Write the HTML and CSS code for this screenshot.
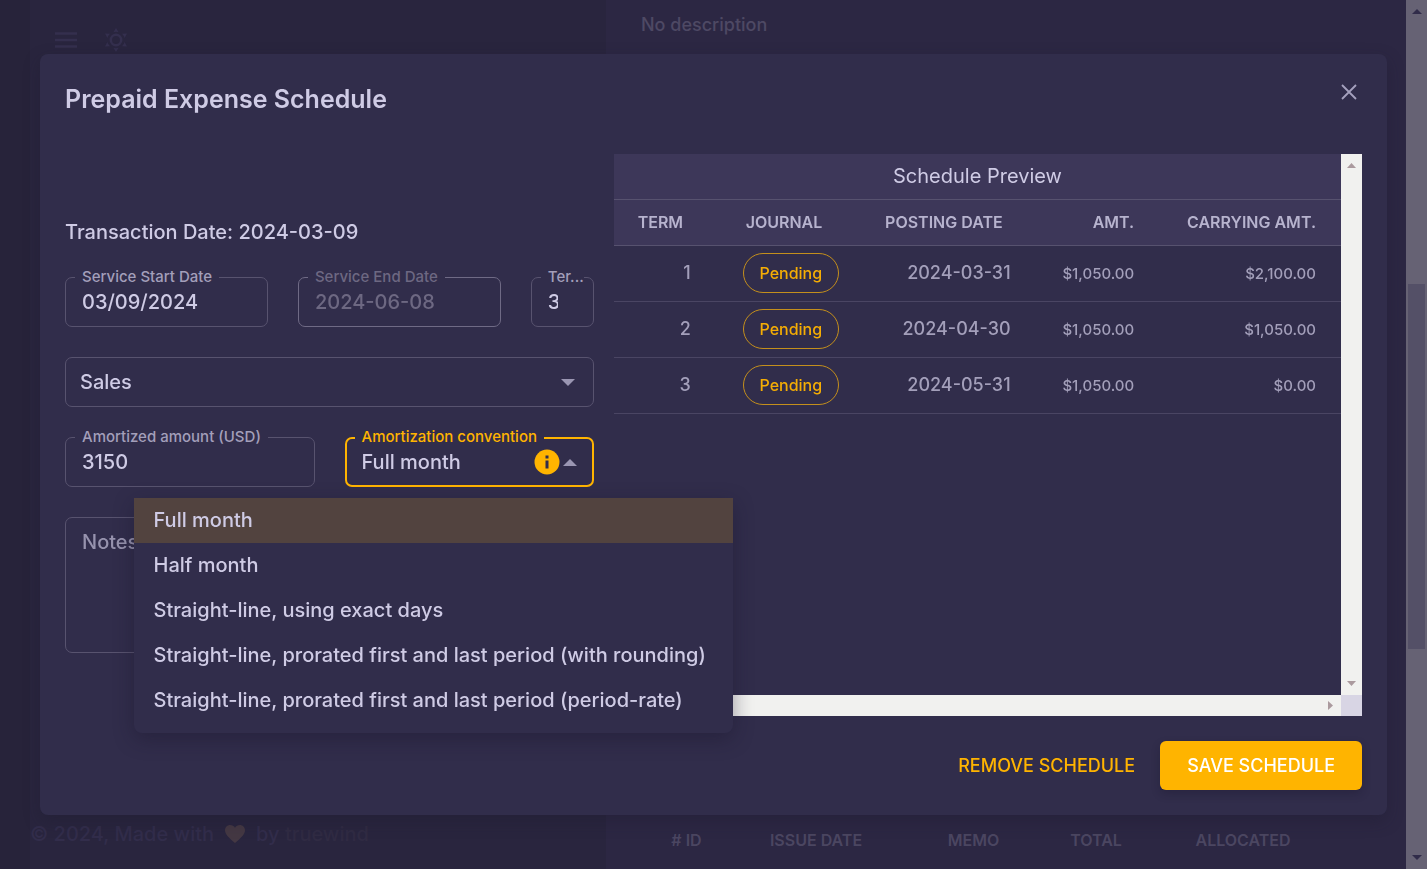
FILE: index.html
```html
<!DOCTYPE html>
<html lang="en">
<head>
<meta charset="utf-8">
<meta name="viewport" content="width=device-width, initial-scale=1">
<title>Prepaid Expense Schedule</title>
<link rel="stylesheet" href="styles.css">
</head>
<body>
<div class="page">
  <div class="page-left">
    <header class="toolbar">
      <button class="tool" type="button" aria-label="Menu">
        <svg width="24" height="24" viewBox="0 0 24 24" fill="none" stroke="currentColor" stroke-width="2.500"><path d="M1 5.500h22M1 12h22M1 18.500h22"/></svg>
      </button>
      <button class="tool" type="button" aria-label="Toggle theme">
        <svg width="24" height="24" viewBox="0 0 24 24" fill="none" stroke="currentColor" stroke-width="2.500"><circle cx="12" cy="12" r="5.200"/><path fill="currentColor" stroke="none" d="M12 0l2.600 4.300a8 8 0 0 0-5.200 0zM12 24l2.600-4.300a8 8 0 0 1-5.200 0zM1 5.600l5 .1a9 9 0 0 0-2.600 4.400zM23 5.600l-5 .1a9 9 0 0 1 2.600 4.400zM1 18.400l5-.1a9 9 0 0 1-2.600-4.400zM23 18.400l-5-.1a9 9 0 0 0 2.600-4.400z"/></svg>
      </button>
    </header>
    <footer class="credits">
      <span>© 2024, Made with</span>
      <svg class="heart" width="20" height="18" viewBox="0 0 20 18"><path fill="currentColor" d="M10 18C4 13 0 9.500 0 5.300 0 2.200 2.300 0 5.200 0 7.200 0 9 1 10 2.700 11 1 12.800 0 14.800 0 17.700 0 20 2.200 20 5.300 20 9.500 16 13 10 18z"/></svg>
      <span>by <a class="credits-link" href="#">truewind</a></span>
    </footer>
  </div>
  <main class="page-right">
    <p class="description">No description</p>
    <table class="bills">
      <colgroup><col class="b-id"><col class="b-date"><col class="b-memo"><col class="b-total"><col class="b-alloc"></colgroup>
      <thead><tr><th># ID</th><th>Issue Date</th><th>Memo</th><th>Total</th><th>Allocated</th></tr></thead>
    </table>
  </main>
  <div class="page-scroll">
    <svg width="10" height="5" viewBox="0 0 10 5"><path d="M0 5l5-5 5 5z"/></svg>
    <div class="page-thumb"></div>
    <svg width="10" height="5" viewBox="0 0 10 5"><path d="M0 0l5 5 5-5z"/></svg>
  </div>
</div>

<div class="overlay">
  <section class="dialog" role="dialog" aria-labelledby="dialog-title">
    <header class="dialog-head">
      <h1 class="title" id="dialog-title">Prepaid Expense Schedule</h1>
      <button class="close" type="button" aria-label="Close">
        <svg width="16" height="16" viewBox="0 0 16 16" fill="none" stroke="currentColor" stroke-width="1.800"><path d="M1 1l14 14M15 1L1 15"/></svg>
      </button>
    </header>

    <div class="dialog-body">
      <form class="form">
        <p class="transaction">Transaction Date: 2024-03-09</p>
        <div class="field span-5">
          <label class="label" for="start">Service Start Date</label>
          <input class="control" id="start" type="text" value="03/09/2024">
        </div>
        <div class="field span-5 is-disabled">
          <label class="label" for="end">Service End Date</label>
          <input class="control" id="end" type="text" value="2024-06-08" disabled>
        </div>
        <div class="field span-2">
          <label class="label label-short" for="terms">Ter...</label>
          <input class="control control-short" id="terms" type="text" value="3">
        </div>
        <div class="field span-12">
          <select class="control control-account" aria-label="Account"><option>Sales</option></select>
          <svg class="caret" width="14" height="7" viewBox="0 0 14 7"><path fill="currentColor" d="M0 0l7 7 7-7z"/></svg>
        </div>
        <div class="field span-6">
          <label class="label" for="amount">Amortized amount (USD)</label>
          <input class="control" id="amount" type="text" value="3150">
        </div>
        <div class="field span-6 is-focused">
          <label class="label" for="convention">Amortization convention</label>
          <select class="control" id="convention">
            <option>Full month</option><option>Half month</option>
            <option>Straight-line, using exact days</option>
            <option>Straight-line, prorated first and last period (with rounding)</option>
            <option>Straight-line, prorated first and last period (period-rate)</option>
          </select>
          <div class="adorn">
            <svg width="26" height="26" viewBox="0 0 26 26"><circle cx="13" cy="13" r="12.500" fill="#ffb400"/><path fill="#312d4b" d="M11.500 6.500h3v3h-3zM11.500 11.500h3v8h-3z"/></svg>
            <svg class="caret-up" width="14" height="7" viewBox="0 0 14 7"><path fill="currentColor" d="M0 7l7-7 7 7z"/></svg>
          </div>
          <ul class="menu" role="listbox" aria-label="Amortization convention">
            <li class="option is-selected" role="option" aria-selected="true">Full month</li>
            <li class="option" role="option">Half month</li>
            <li class="option" role="option">Straight-line, using exact days</li>
            <li class="option" role="option">Straight-line, prorated first and last period (with rounding)</li>
            <li class="option" role="option">Straight-line, prorated first and last period (period-rate)</li>
          </ul>
        </div>
        <div class="field span-12">
          <textarea class="control notes" rows="4" placeholder="Notes" aria-label="Notes"></textarea>
        </div>
      </form>

      <div class="preview">
        <div class="preview-view">
          <table class="schedule">
            <colgroup><col class="c-term"><col class="c-journal"><col class="c-date"><col class="c-amt"><col class="c-carry"></colgroup>
            <thead>
              <tr><th class="caption" colspan="5">Schedule Preview</th></tr>
              <tr><th class="mid">Term</th><th class="mid">Journal</th><th class="mid">Posting Date</th><th>Amt.</th><th>Carrying Amt.</th></tr>
            </thead>
            <tbody>
              <tr><td>1</td><td class="status"><span class="chip">Pending</span></td><td>2024-03-31</td><td class="money">$1,050.00</td><td class="money">$2,100.00</td></tr>
              <tr><td>2</td><td class="status"><span class="chip">Pending</span></td><td>2024-04-30</td><td class="money">$1,050.00</td><td class="money">$1,050.00</td></tr>
              <tr><td>3</td><td class="status"><span class="chip">Pending</span></td><td>2024-05-31</td><td class="money">$1,050.00</td><td class="money">$0.00</td></tr>
            </tbody>
          </table>
        </div>
        <div class="bar bar-y">
          <svg width="9" height="5" viewBox="0 0 9 5"><path d="M0 5l4.500-5L9 5z"/></svg>
          <svg width="9" height="5" viewBox="0 0 9 5"><path d="M0 0l4.500 5L9 0z"/></svg>
        </div>
        <div class="bar bar-x">
          <svg width="5" height="9" viewBox="0 0 5 9"><path d="M5 0L0 4.500 5 9z"/></svg>
          <svg width="5" height="9" viewBox="0 0 5 9"><path d="M0 0l5 4.500L0 9z"/></svg>
        </div>
        <div class="corner"></div>
      </div>
    </div>

    <footer class="actions">
      <button class="btn" type="button">Remove Schedule</button>
      <button class="btn btn-primary" type="button">Save Schedule</button>
    </footer>
  </section>
</div>
</body>
</html>
```
FILE: styles.css
```css
* { box-sizing: border-box; }
html, body { height: 100%; }
body {
  margin: 0;
  overflow: hidden;
  background: #28243b;
  color: #cfcbe5;
  font-family: Inter, "Liberation Sans", sans-serif;
  font-size: 20px;
  font-weight: 500;
  line-height: 30px;
}
p, h1, ul { margin: 0; padding: 0; }
button, input, select, textarea { font: inherit; color: inherit; }
svg { display: block; }

/* Dimmed page behind the dialog */
.page { display: flex; height: 100%; }
.page-left {
  flex: 0 0 606px;
  display: flex;
  flex-direction: column;
  justify-content: space-between;
  padding: 28px 30px 20px;
  background: linear-gradient(90deg, #27233a 30px, #29253e 30px);
}
.toolbar { display: flex; gap: 26px; padding-left: 24px; }
.tool { padding: 0; border: 0; background: none; color: #342f4e; }
.credits { display: flex; align-items: center; gap: 11px; color: #322d4b; }
.heart { color: #443843; }
.credits-link { color: #302b43; text-decoration: none; }
.page-right {
  flex: 1;
  display: flex;
  flex-direction: column;
  justify-content: space-between;
  padding: 10px 65px 14px 35px;
  background: #2c2743;
}
.description { color: #4e4964; font-size: 18px; }
.bills { width: 100%; table-layout: fixed; border-collapse: collapse; }
.bills th { padding: 0; color: #4b4661; font-size: 16px; font-weight: 600; text-transform: uppercase; }
.b-id { width: 13%; }
.b-date { width: 24%; }
.b-memo { width: 21%; }
.b-total { width: 14%; }
.b-alloc { width: 28%; }
.page-scroll {
  flex: 0 0 21px;
  display: flex;
  flex-direction: column;
  align-items: center;
  justify-content: space-between;
  padding: 9px 0;
  background: #666274;
  fill: #312c4a;
}
.page-thumb { width: 17px; height: 43%; margin-top: 64px; background: #545067; }

/* Dialog */
.overlay { position: fixed; inset: 0; padding: 54px 40px; }
.dialog {
  display: flex;
  flex-direction: column;
  height: 100%;
  padding: 25px;
  border-radius: 8px;
  background: #312d4b;
  box-shadow: 0 6px 16px rgba(30, 26, 45, 0.35);
}
.dialog-head { display: flex; justify-content: space-between; align-items: flex-start; margin-bottom: 35px; }
.title { font-size: 25px; font-weight: 600; line-height: 40px; }
.close { padding: 5px; border: 0; background: none; color: #a5a1be; }
.dialog-body { flex: 1; min-height: 0; display: grid; grid-template-columns: 529fr 748fr; gap: 20px; }

.form {
  display: grid;
  grid-template-columns: repeat(12, minmax(0, 1fr));
  gap: 30px;
  align-content: center;
}
.transaction { grid-column: span 12; }
.field { position: relative; display: flex; }
.span-2 { grid-column: span 2; }
.span-5 { grid-column: span 5; }
.span-6 { grid-column: span 6; }
.span-12 { grid-column: span 12; }
.control {
  width: 100%;
  min-width: 0;
  padding: 9px 16px;
  border: 1px solid #58536f;
  border-radius: 7px;
  outline: 0;
  background: none;
  appearance: none;
  line-height: 30px;
}
.control-account { padding-left: 14px; }
.control-short { padding-right: 35px; }
.label {
  position: absolute;
  top: -10px;
  left: 10px;
  padding: 0 7px;
  background: #312d4b;
  color: #a39fba;
  font-size: 15px;
  line-height: 20px;
}
.label-short { padding-right: 0; }
.is-disabled .control { border-color: #6f6a85; color: #6d6882; }
.is-disabled .label { color: #6d6882; }
.is-focused .control { padding: 8px 15px; border: 2px solid #ffb400; }
.is-focused .label { color: #ffb400; }
.caret { position: absolute; right: 19px; top: 22px; color: #9a96b2; }
.adorn {
  position: absolute;
  right: 17px;
  top: 12px;
  display: flex;
  align-items: center;
  gap: 3px;
  color: #9a96b2;
}
.notes { display: block; height: 136px; resize: none; }
.notes::placeholder { color: #9793ae; opacity: 1; }

.menu {
  position: absolute;
  top: 61px;
  right: -139px;
  left: -211px;
  z-index: 2;
  padding-bottom: 10px;
  border-radius: 0 0 8px 8px;
  background: #312d4b;
  box-shadow: 0 6px 20px rgba(24, 20, 42, 0.4);
  list-style: none;
}
.option { padding: 7px 0 8px 20px; white-space: nowrap; }
.is-selected { background: #52433f; }

/* Schedule preview */
.preview { display: grid; grid-template-columns: 1fr 21px; grid-template-rows: 1fr 21px; min-height: 0; }
.preview-view { overflow: hidden; }
.schedule { width: 100%; table-layout: fixed; border-collapse: separate; border-spacing: 0; }
.c-term { width: 14%; }
.c-journal { width: 20%; }
.c-date { width: 24%; }
.c-amt { width: 17%; }
.c-carry { width: 25%; }
.schedule th {
  height: 46px;
  padding: 0 25px 2px 0;
  border-bottom: 1px solid #57526f;
  background: #3d3759;
  color: #b7b3ce;
  font-size: 16px;
  font-weight: 600;
  line-height: 24px;
  text-align: right;
  text-transform: uppercase;
  white-space: nowrap;
}
.schedule th.mid { padding: 0 9px 2px 0; text-align: center; }
.schedule th.caption { padding: 0 0 2px; color: #cfcbe5; font-size: 20px; font-weight: 400; text-align: center; text-transform: none; }
.schedule td {
  height: 56px;
  padding: 0 25px 2px 0;
  border-bottom: 1px solid #4a4563;
  color: #a39fba;
  font-size: 18px;
  line-height: 26px;
  text-align: right;
}
.schedule td.money { padding-bottom: 0; font-size: 15px; }
.schedule td.status { padding-right: 22px; }
.chip {
  display: inline-block;
  padding: 6px 16px;
  border: 1px solid #c48f1c;
  border-radius: 20px;
  color: #f5ad04;
  font-size: 16px;
  vertical-align: middle;
}
.bar { display: flex; align-items: center; justify-content: space-between; background: #f1f1ef; fill: #ab9a9e; }
.bar-y { flex-direction: column; padding: 9px 0; }
.bar-x { padding: 0 8px; }
.corner { background: #d8d5e4; }

.actions { display: flex; justify-content: flex-end; gap: 11px; margin-top: 25px; }
.btn {
  padding: 9px 14px;
  border: 0;
  border-radius: 6px;
  background: none;
  color: #ffb400;
  font-size: 18px;
  line-height: 31px;
  text-transform: uppercase;
}
.btn-primary { padding: 9px 27px; background: #ffb400; color: #fff; box-shadow: 0 4px 8px rgba(24, 20, 42, 0.3); }
```
